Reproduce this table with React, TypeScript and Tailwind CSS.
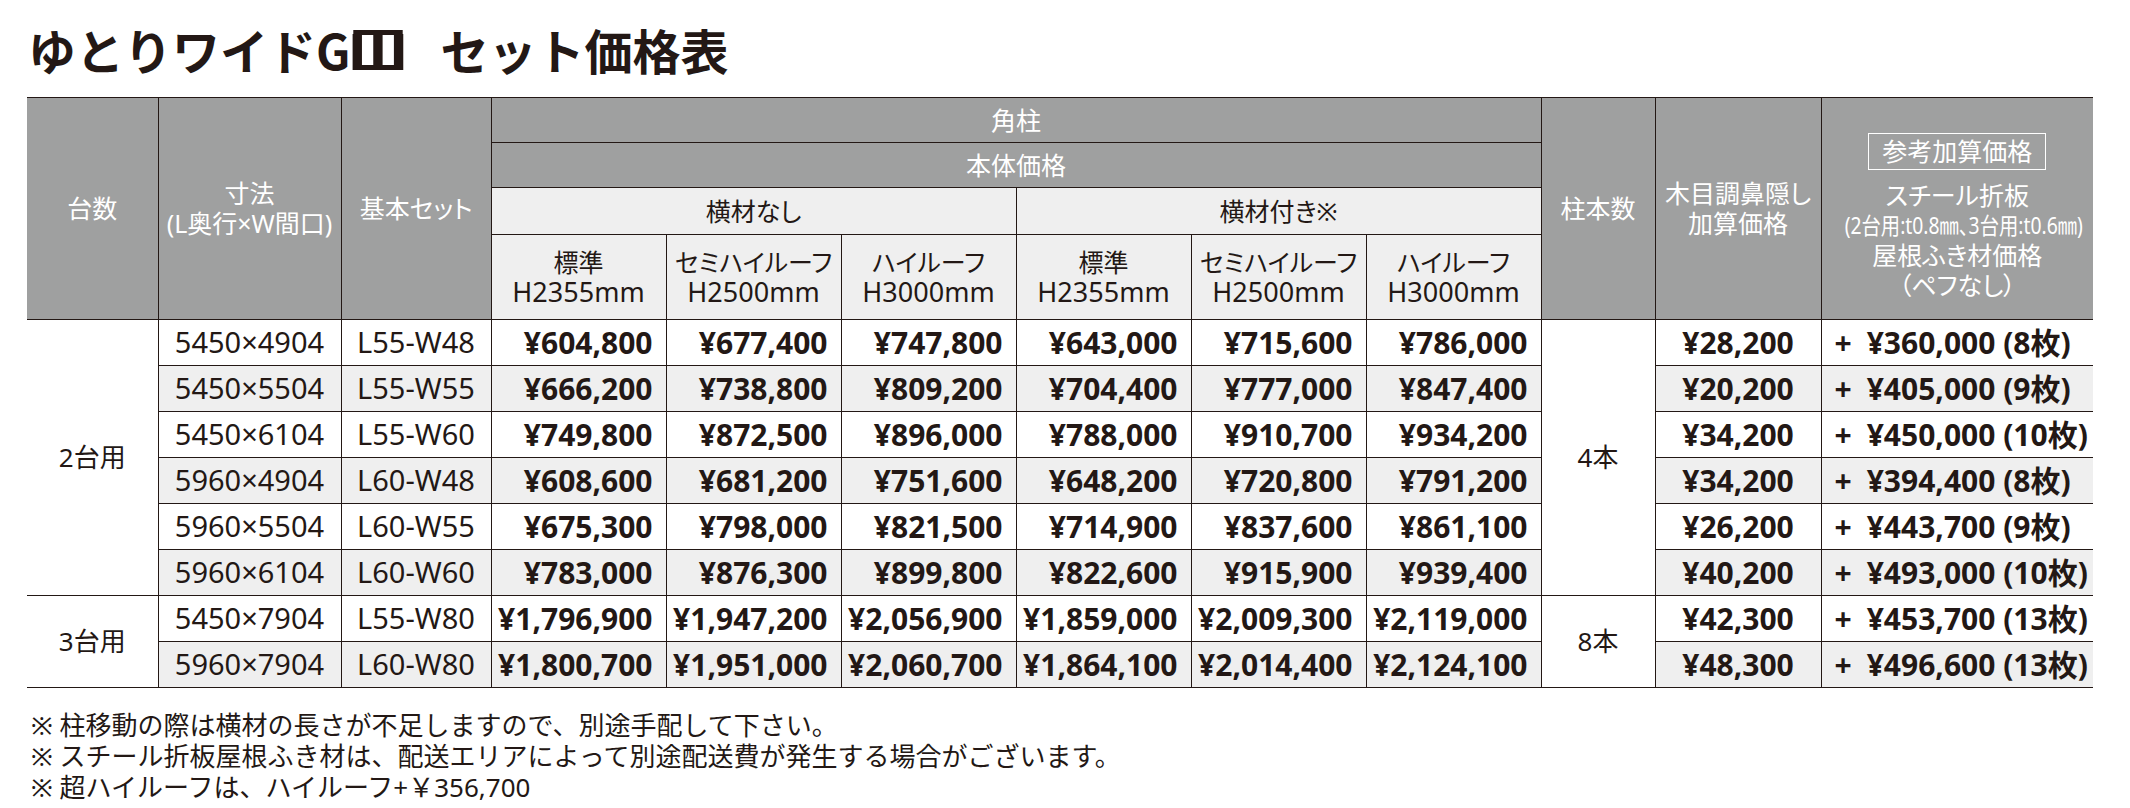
import React from 'react';

type Row = {
  size: string;
  set: string;
  prices: string[];
  wood: string;
  steel: string;
  sheets: string;
};

const rows: Row[] = [
  { size: '5450×4904', set: 'L55-W48', prices: ['¥604,800', '¥677,400', '¥747,800', '¥643,000', '¥715,600', '¥786,000'], wood: '¥28,200', steel: '¥360,000', sheets: '8枚' },
  { size: '5450×5504', set: 'L55-W55', prices: ['¥666,200', '¥738,800', '¥809,200', '¥704,400', '¥777,000', '¥847,400'], wood: '¥20,200', steel: '¥405,000', sheets: '9枚' },
  { size: '5450×6104', set: 'L55-W60', prices: ['¥749,800', '¥872,500', '¥896,000', '¥788,000', '¥910,700', '¥934,200'], wood: '¥34,200', steel: '¥450,000', sheets: '10枚' },
  { size: '5960×4904', set: 'L60-W48', prices: ['¥608,600', '¥681,200', '¥751,600', '¥648,200', '¥720,800', '¥791,200'], wood: '¥34,200', steel: '¥394,400', sheets: '8枚' },
  { size: '5960×5504', set: 'L60-W55', prices: ['¥675,300', '¥798,000', '¥821,500', '¥714,900', '¥837,600', '¥861,100'], wood: '¥26,200', steel: '¥443,700', sheets: '9枚' },
  { size: '5960×6104', set: 'L60-W60', prices: ['¥783,000', '¥876,300', '¥899,800', '¥822,600', '¥915,900', '¥939,400'], wood: '¥40,200', steel: '¥493,000', sheets: '10枚' },
  { size: '5450×7904', set: 'L55-W80', prices: ['¥1,796,900', '¥1,947,200', '¥2,056,900', '¥1,859,000', '¥2,009,300', '¥2,119,000'], wood: '¥42,300', steel: '¥453,700', sheets: '13枚' },
  { size: '5960×7904', set: 'L60-W80', prices: ['¥1,800,700', '¥1,951,000', '¥2,060,700', '¥1,864,100', '¥2,014,400', '¥2,124,100'], wood: '¥48,300', steel: '¥496,600', sheets: '13枚' },
];

const heights = [
  { label: '標準', h: 'H2355mm' },
  { label: 'セミハイルーフ', h: 'H2500mm' },
  { label: 'ハイルーフ', h: 'H3000mm' },
];

// shared cell styles
const line = 'border border-[#231815]';
const gray = `${line} bg-[#9fa0a0] text-white font-normal text-center`;
const light = `${line} bg-[#efefef] text-[#231815] font-normal text-center`;

const App: React.FC = () => {
  return (
    <div className="min-h-screen bg-white text-[#231815] font-['Noto_Sans','Noto_Sans_CJK_JP',sans-serif]">
      {/* Title */}
      <h1 className="pt-[20px] pl-[28px] text-[48px] leading-[58px] font-bold font-['Noto_Sans_CJK_JP',sans-serif] whitespace-nowrap">
        ゆとりワイドG
        <span className="relative inline-block mx-[4px] scale-x-[1.3]">
          Ⅲ
          <span className="absolute left-[5px] right-[5px] top-[10px] h-[5px] bg-[#231815]" />
          <span className="absolute left-[5px] right-[5px] top-[45px] h-[5px] bg-[#231815]" />
        </span>
        <span className="ml-[34px]">セット価格表</span>
      </h1>

      {/* Price table */}
      <div className="mt-[19px] ml-[27px] w-[2066px] border-t-[1.5px] border-b border-[#231815]">
        <table className="w-full table-fixed border-collapse border-hidden">
          <colgroup>
            <col className="w-[131px]" />
            <col className="w-[183px]" />
            <col className="w-[150px]" />
            <col className="w-[175px]" />
            <col className="w-[175px]" />
            <col className="w-[175px]" />
            <col className="w-[175px]" />
            <col className="w-[175px]" />
            <col className="w-[175px]" />
            <col className="w-[114px]" />
            <col className="w-[166px]" />
            <col className="w-[272px]" />
          </colgroup>
          <thead className="text-[25px] leading-[30px] [font-feature-settings:'palt']">
            <tr className="h-[44px]">
              <th rowSpan={4} className={gray}>台数</th>
              <th rowSpan={4} className={gray}>
                <div>寸法</div>
                <div>(L奥行×W間口)</div>
              </th>
              <th rowSpan={4} className={gray}>基本セット</th>
              <th colSpan={6} className={gray}>角柱</th>
              <th rowSpan={4} className={gray}>柱本数</th>
              <th rowSpan={4} className={gray}>
                <div>木目調鼻隠し</div>
                <div>加算価格</div>
              </th>
              <th rowSpan={4} className={`${gray} align-top pt-[35px]`}>
                <div className="inline-block border border-white px-[13px] leading-[35px]">参考加算価格</div>
                <div className="mt-[10px]">スチール折板</div>
                <div className="text-[23px] whitespace-nowrap">
                  <span className="inline-block scale-x-[0.84]">(2台用:t0.8㎜、3台用:t0.6㎜)</span>
                </div>
                <div>屋根ふき材価格</div>
                <div>（ペフなし）</div>
              </th>
            </tr>
            <tr className="h-[45px]">
              <th colSpan={6} className={gray}>本体価格</th>
            </tr>
            <tr className="h-[47px]">
              <th colSpan={3} className={light}>横材なし</th>
              <th colSpan={3} className={light}>横材付き※</th>
            </tr>
            <tr className="h-[85px]">
              {[...heights, ...heights].map((c, i) => (
                <th key={i} className={light}>
                  <div className="leading-[29px]">{c.label}</div>
                  <div className="text-[27px] leading-[29px] font-['Noto_Sans',sans-serif]">{c.h}</div>
                </th>
              ))}
            </tr>
          </thead>
          <tbody>
            {rows.map((r, i) => {
              const bg = i % 2 === 1 ? 'bg-[#efefef]' : 'bg-white';
              return (
                <tr key={r.size + r.set} className="h-[45px]">
                  {i === 0 && (
                    <td rowSpan={6} className={`${line} bg-white text-center text-[26px]`}>2台用</td>
                  )}
                  {i === 6 && (
                    <td rowSpan={2} className={`${line} bg-white text-center text-[26px]`}>3台用</td>
                  )}
                  <td className={`${line} ${bg} text-center text-[29px]`}>{r.size}</td>
                  <td className={`${line} ${bg} text-center text-[29px]`}>{r.set}</td>
                  {r.prices.map((p, j) => (
                    <td key={j} className={`${line} ${bg} text-right pr-[13px] text-[30px] font-bold`}>{p}</td>
                  ))}
                  {i === 0 && (
                    <td rowSpan={6} className={`${line} bg-white text-center text-[26px]`}>4本</td>
                  )}
                  {i === 6 && (
                    <td rowSpan={2} className={`${line} bg-white text-center text-[26px]`}>8本</td>
                  )}
                  <td className={`${line} ${bg} text-center text-[30px] font-bold`}>{r.wood}</td>
                  <td className={`${line} ${bg} text-left pl-[13px] text-[30px] font-bold whitespace-nowrap`}>
                    +{'\u2002'}{r.steel} ({r.sheets})
                  </td>
                </tr>
              );
            })}
          </tbody>
        </table>
      </div>

      {/* Notes */}
      <div className="mt-[22px] pl-[31px] text-[26px] leading-[31px]">
        <p>※ 柱移動の際は横材の長さが不足しますので、別途手配して下さい。</p>
        <p>※ スチール折板屋根ふき材は、配送エリアによって別途配送費が発生する場合がございます。</p>
        <p>※ 超ハイルーフは、ハイルーフ+￥356,700</p>
      </div>
    </div>
  );
};

export default App;
